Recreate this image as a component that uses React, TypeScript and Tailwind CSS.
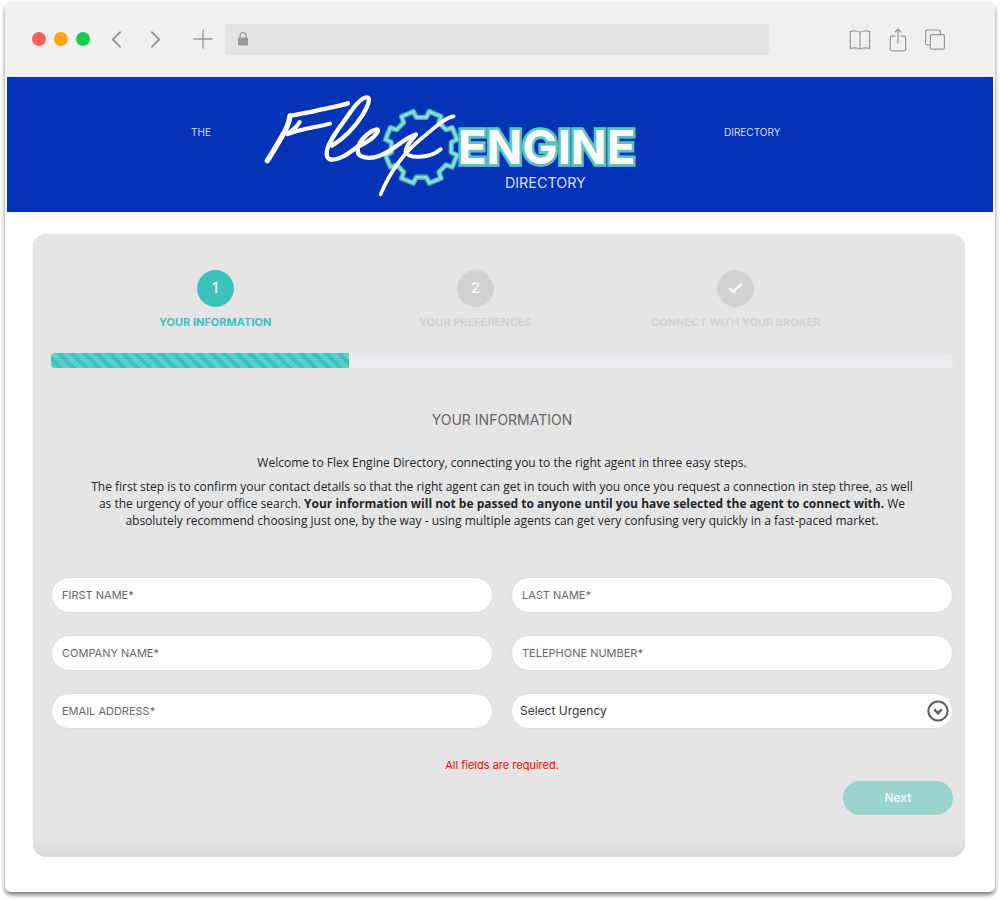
import { useState } from 'react';
import type { ReactNode } from 'react';
import { Check, ChevronLeft, ChevronRight } from 'lucide-react';

const steps = [
  { label: 'Your Information', marker: '1' },
  { label: 'Your Preferences', marker: '2' },
  { label: 'Connect With Your Broker', marker: null },
];

const textFields = [
  { name: 'firstName', label: 'FIRST NAME*', type: 'text' },
  { name: 'lastName', label: 'LAST NAME*', type: 'text' },
  { name: 'company', label: 'COMPANY NAME*', type: 'text' },
  { name: 'telephone', label: 'TELEPHONE NUMBER*', type: 'tel' },
  { name: 'email', label: 'EMAIL ADDRESS*', type: 'email' },
];

const urgencyOptions = ['Immediately', 'Within 3 months', 'Within 6 months'];

// Outline of an eight-toothed cog around (cx, cy)
function getGearPoints(cx: number, cy: number) {
  const corners = [
    [-13, 91],
    [-10, 110],
    [10, 110],
    [13, 91],
  ];
  const points: string[] = [];
  for (let tooth = 0; tooth < 8; tooth++) {
    for (const [offset, radius] of corners) {
      const angle = ((22.5 + tooth * 45 + offset) * Math.PI) / 180;
      points.push(
        `${(cx + radius * Math.cos(angle)).toFixed(1)},${(cy + radius * Math.sin(angle)).toFixed(1)}`,
      );
    }
  }
  return points.join(' ');
}

function Logo() {
  const gear = getGearPoints(514, 202);

  return (
    <svg
      viewBox="18 24 1152 348"
      className="w-full"
      role="img"
      aria-label="Flex Engine Directory"
      fill="none"
      strokeLinecap="round"
      strokeLinejoin="round"
    >
      <polygon points={gear} stroke="#3fb0b5" strokeWidth="16" />
      <polygon points={gear} stroke="#8edbd5" strokeWidth="8" />
      <text
        x="624"
        y="251"
        fontSize="141"
        className="font-['Inter'] font-bold"
        fill="#fff"
        stroke="#5cc4bf"
        strokeWidth="16"
        paintOrder="stroke"
        strokeLinejoin="miter"
      >
        ENGINE
      </text>
      <text
        x="886"
        y="323"
        fontSize="43"
        textAnchor="middle"
        className="font-['Inter']"
        fill="#d5def5"
      >
        DIRECTORY
      </text>
      <g stroke="#fff" strokeWidth="13">
        <path d="M294 70 C262 80 232 84 202 91 C172 99 145 101 120 108" />
        <path d="M120 108 C117 130 107 152 93 174 C78 200 65 222 52 242" strokeWidth="16" />
        <path d="M149 126 C139 146 124 150 112 163 C152 146 196 143 240 131" strokeWidth="12" />
        <path d="M246 197 C290 170 320 133 339 103 C354 78 361 57 354 53 C341 48 319 72 302 95 C272 139 236 181 231 212 C226 239 242 244 267 235 C291 226 309 211 326 197" />
        <path d="M322 201 C350 190 382 166 384 151 C380 142 354 158 338 177 C320 199 318 221 334 229 C361 241 398 226 426 207 C451 191 476 168 498 164" />
        <path d="M498 164 C482 183 465 201 467 216 C476 237 540 236 572 208" strokeWidth="12" />
        <path d="M611 109 C585 112 550 146 516 174 C468 213 425 263 392 343" strokeWidth="11" />
      </g>
    </svg>
  );
}

function ToolbarButton({ label, children }: { label: string; children: ReactNode }) {
  return (
    <button type="button" aria-label={label} className="flex items-center text-[#999]">
      {children}
    </button>
  );
}

function BrowserBar() {
  return (
    <div className="flex h-[75px] items-center rounded-t-md bg-[#f0f0f0] pr-[50px] pb-px pl-[27px]">
      <div className="flex gap-2" aria-hidden="true">
        <span className="h-3.5 w-3.5 rounded-full bg-[#ff5f5a]" />
        <span className="h-3.5 w-3.5 rounded-full bg-[#ffa314]" />
        <span className="h-3.5 w-3.5 rounded-full bg-[#1bca50]" />
      </div>

      <div className="ml-3 flex gap-2.5">
        <ToolbarButton label="Back">
          <ChevronLeft size={29} strokeWidth={1.6} />
        </ToolbarButton>
        <ToolbarButton label="Forward">
          <ChevronRight size={29} strokeWidth={1.6} />
        </ToolbarButton>
      </div>

      <div className="mr-3 ml-[23px]">
        <ToolbarButton label="New tab">
          <svg width="20" height="20" viewBox="0 0 20 20" stroke="currentColor" strokeWidth="1.4">
            <path d="M10 0.5v19M0.5 10h19" />
          </svg>
        </ToolbarButton>
      </div>

      <div className="flex h-[31px] flex-1 items-center rounded bg-[#e4e4e4] px-3">
        <svg width="12" height="14" viewBox="0 0 12 14" fill="none" className="text-[#999]">
          <path d="M3 6V3.6a3 3 0 0 1 6 0V6" stroke="currentColor" strokeWidth="1.2" />
          <rect x="1" y="5.6" width="10" height="8" rx="1" fill="currentColor" />
        </svg>
      </div>

      <div className="ml-20 flex items-center gap-[18px] pt-px">
        <ToolbarButton label="Bookmarks">
          <svg width="22" height="22" viewBox="0 0 22 22" fill="none" stroke="currentColor" strokeWidth="1.2" strokeLinejoin="round">
            <path d="M11 3.2C9 1.8 4 1.6 1.4 2.6v17C4 18.4 9 18.5 11 20c2-1.5 7-1.6 9.6-.4v-17C18 1.6 13 1.8 11 3.2zM11 3.2V20" />
          </svg>
        </ToolbarButton>
        <ToolbarButton label="Share">
          <svg width="18" height="24" viewBox="0 0 18 24" fill="none" stroke="currentColor" strokeWidth="1.2" strokeLinecap="round" strokeLinejoin="round">
            <path d="M6 8.2H3A1.6 1.6 0 0 0 1.4 9.8v11.4A1.6 1.6 0 0 0 3 22.8h12a1.6 1.6 0 0 0 1.6-1.6V9.8A1.6 1.6 0 0 0 15 8.2h-3M9 15V1M6 4l3-3 3 3" />
          </svg>
        </ToolbarButton>
        <ToolbarButton label="Tabs">
          <svg width="20" height="21" viewBox="0 0 20 21" fill="none" stroke="currentColor" strokeWidth="1.2">
            <rect x="5.4" y="5.6" width="14" height="14.6" rx="1.6" />
            <path d="M15.4 5.6V2.6A1.6 1.6 0 0 0 13.8 1H2.2A1.6 1.6 0 0 0 .6 2.6v11.6a1.6 1.6 0 0 0 1.6 1.6h3.2" />
          </svg>
        </ToolbarButton>
      </div>
    </div>
  );
}

function StepList() {
  return (
    <ol className="mr-[87px] ml-[34px] grid grid-cols-3">
      {steps.map((step, index) => {
        const isActive = index === 0;

        return (
          <li key={step.label} className="flex flex-col items-center gap-[7px]">
            <span
              className={[
                'flex h-[37px] w-[37px] items-center justify-center rounded-full text-[15px] font-medium text-white',
                isActive ? 'bg-[#3cc2bd]' : 'bg-[#d2d2d2]',
              ].join(' ')}
            >
              {step.marker ?? <Check size={17} strokeWidth={3} />}
            </span>
            <span
              className={[
                'text-[11px] leading-4 font-bold whitespace-nowrap uppercase',
                isActive ? 'text-[#3cc2bd]' : 'text-[#d2d2d2]',
              ].join(' ')}
            >
              {step.label}
            </span>
          </li>
        );
      })}
    </ol>
  );
}

export default function App() {
  const [urgency, setUrgency] = useState('');

  return (
    <div className="bg-white px-[5px] pt-0.5 pb-2 font-['Inter','Noto_Sans',sans-serif]">
      <div className="rounded-md bg-white pb-[35px] shadow-[0_3px_4px_rgba(0,0,0,0.5)]">
        <BrowserBar />

        <header className="mx-0.5 grid h-[135px] grid-cols-[249fr_384fr_353fr] bg-[#0433b7] pt-[11px] text-[10px] leading-4 text-[#d5def5]">
          <span className="pt-9 pr-[45px] text-right">THE</span>
          <Logo />
          <span className="pt-9 pl-[84px]">DIRECTORY</span>
        </header>

        <main className="mr-[30px] ml-7 mt-[22px] rounded-[14px] bg-[#e5e5e5] bg-linear-to-t from-[#dadada] to-[#e5e5e5] to-[20px] pt-9 pr-3 pb-[42px] pl-[18px] shadow-[0_0_1px_#ccc]">
          <StepList />

          <div
            className="mt-[23px] h-[15px] overflow-hidden rounded bg-[#e9ebef]"
            role="progressbar"
            aria-label="Form progress"
            aria-valuenow={33}
          >
            <div className="h-full w-[33%] bg-[#3cc2bd] bg-[repeating-linear-gradient(45deg,rgba(255,255,255,0.18)_0px,rgba(255,255,255,0.18)_5px,transparent_5px,transparent_9px)]" />
          </div>

          <section className="mx-10 mt-10 text-center text-xs leading-[17px] text-[#212529]">
            <h1 className="text-sm leading-6 text-[#666]">YOUR INFORMATION</h1>
            <div className="font-['Open_Sans','Noto_Sans',sans-serif]">
              <p className="mt-[22px]">
                Welcome to Flex Engine Directory, connecting you to the right agent in three easy
                steps.
              </p>
              <p className="mt-[7px]">
                The first step is to confirm your contact details so that the right agent can get in
                touch with you once you request a connection in step three, as well as the urgency
                of your office search.{' '}
                <strong className="font-bold">
                  Your information will not be passed to anyone until you have selected the agent to
                  connect with.
                </strong>{' '}
                We absolutely recommend choosing just one, by the way - using multiple agents can
                get very confusing very quickly in a fast-paced market.
              </p>
            </div>
          </section>

          <form className="mt-12" onSubmit={(event) => event.preventDefault()}>
            <div className="grid grid-cols-2 gap-x-[18px] gap-y-[22px]">
              {textFields.map((field) => (
                <input
                  key={field.name}
                  name={field.name}
                  type={field.type}
                  aria-label={field.label}
                  placeholder={field.label}
                  className="h-9 w-full rounded-full border border-[#dedede] bg-white px-2.5 text-[11px] text-[#333] placeholder:text-[#666]"
                />
              ))}

              <div className="relative">
                <select
                  name="urgency"
                  aria-label="Select Urgency"
                  value={urgency}
                  onChange={(event) => setUrgency(event.target.value)}
                  className="h-9 w-full appearance-none rounded-full border border-[#dedede] bg-white px-2 text-xs text-[#333]"
                >
                  <option value="">Select Urgency</option>
                  {urgencyOptions.map((option) => (
                    <option key={option}>{option}</option>
                  ))}
                </select>
                <svg
                  viewBox="0 0 22 22"
                  className="pointer-events-none absolute top-[7px] right-1 h-[22px] w-[22px]"
                  fill="none"
                  stroke="#5c5c5c"
                  strokeWidth="2"
                  aria-hidden="true"
                >
                  <circle cx="11" cy="11" r="9.6" />
                  <path d="M7.2 9.4l3.8 3.8 3.8-3.8" strokeWidth="2.4" />
                </svg>
              </div>
            </div>

            <p className="mt-7 text-center text-[11px] leading-[17px] text-[#f00]">
              All fields are required.
            </p>

            <div className="mt-[7px] flex justify-end">
              <button
                type="submit"
                className="h-[34px] w-[110px] rounded-full bg-[#99d4cf] text-xs font-semibold text-[#f0f5f5]"
              >
                Next
              </button>
            </div>
          </form>
        </main>
      </div>
    </div>
  );
}
